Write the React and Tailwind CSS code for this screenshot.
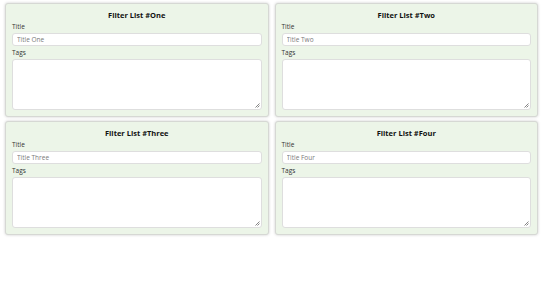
import { useState } from 'react';

const lists = [
  { id: 1, name: 'One' },
  { id: 2, name: 'Two' },
  { id: 3, name: 'Three' },
  { id: 4, name: 'Four' },
];

const FilterCard = ({ name }) => {
  const [title, setTitle] = useState('');
  const [tags, setTags] = useState('');

  return (
    <div className="h-[114px] rounded-[3px] border border-[#d6d8d4] bg-[#ecf5e8] px-[6px] pt-[5px] shadow-[0_0_3px_rgba(0,0,0,0.2)]">
      <h3 className="text-center text-[7.5px] font-bold leading-[12px] text-[#111]">
        Filter List #{name}
      </h3>

      <div className="mt-[2px]">
        <label className="block text-[6.5px] leading-[8px] text-[#333]">Title</label>
        <input
          value={title}
          onChange={(e) => setTitle(e.target.value)}
          placeholder={`Title ${name}`}
          className="mt-[2px] block h-[13px] w-full rounded-[3px] border border-[#dedede] bg-white px-[4px] text-[6.5px] text-[#333] outline-none placeholder:text-[#7a7a7a]"
        />
      </div>

      <div className="mt-[3px]">
        <label className="block text-[6.5px] leading-[8px] text-[#333]">Tags</label>
        <div className="relative mt-[2px]">
          <textarea
            value={tags}
            onChange={(e) => setTags(e.target.value)}
            className="block h-[51px] w-full resize-none rounded-[3px] border border-[#dedede] bg-white px-[4px] text-[6.5px] outline-none"
          />
          {/* small resize grip like the browser's */}
          <svg className="absolute bottom-[2px] right-[2px]" width="5" height="5" viewBox="0 0 5 5">
            <path d="M4.5 0.5 L0.5 4.5 M4.5 2.5 L2.5 4.5" stroke="#777" strokeWidth="0.9" />
          </svg>
        </div>
      </div>
    </div>
  );
};

const App = () => {
  return (
    <div className="min-h-[305px] bg-white font-['Open_Sans',sans-serif]">
      <div className="grid grid-cols-2 gap-x-[6px] gap-y-[4px] pl-[5px] pr-[4px] pt-[3px]">
        {lists.map((list) => (
          <FilterCard key={list.id} name={list.name} />
        ))}
      </div>
    </div>
  );
};

export default App;
